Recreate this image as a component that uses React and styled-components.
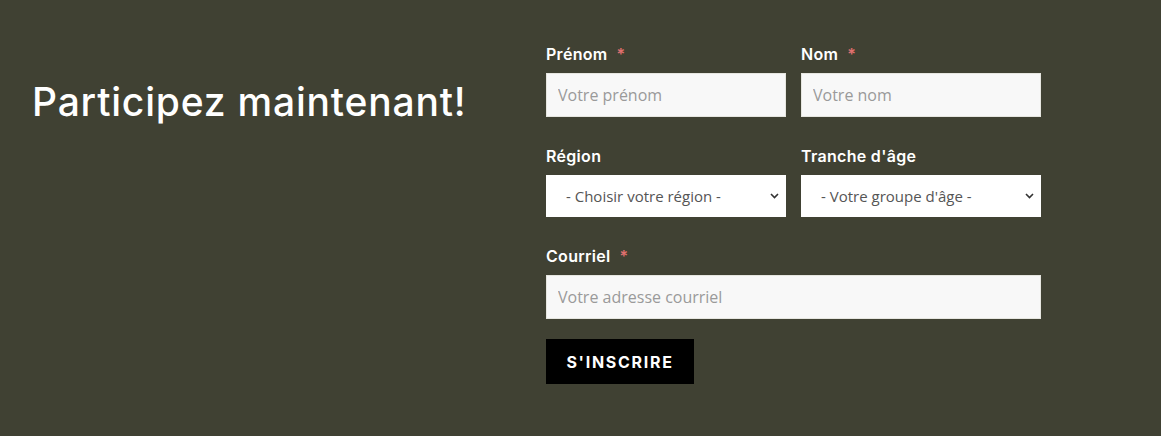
import React from "react";
import styled, { createGlobalStyle } from "styled-components";

const Global = createGlobalStyle`
  html, body { margin: 0; padding: 0; background: #404133; }
  body { font-family: Inter, "Liberation Sans", sans-serif; }
  * { box-sizing: border-box; }
`;

const Section = styled.section`
  display: flex;
  padding: 43px 0 50px 32px;
  background: #404133;
  min-height: 436px;
`;

const Intro = styled.div`
  width: 514px;
  flex: none;
  padding-top: 34px;
`;

const Heading = styled.h2`
  margin: 0;
  color: #fff;
  font-family: Inter, "Liberation Sans", sans-serif;
  font-size: 39px;
  font-weight: 500;
  letter-spacing: 0.8px;
  line-height: 50px;
`;

const Form = styled.form`
  width: 495px;
  display: grid;
  grid-template-columns: 240px 240px;
  column-gap: 15px;
  row-gap: 28px;
  align-content: start;
`;

const Field = styled.div`
  display: flex;
  flex-direction: column;
  grid-column: ${(p) => (p.$wide ? "1 / span 2" : "auto")};
`;

const Label = styled.label`
  display: block;
  color: #fff;
  font-family: Inter, "Liberation Sans", sans-serif;
  font-weight: 600;
  font-size: 16px;
  letter-spacing: 0.3px;
  line-height: 22px;
  margin-bottom: 8px;
`;

const Star = styled.span`
  color: #e0706f;
  margin-left: 9px;
`;

const Input = styled.input`
  height: 44px;
  width: 100%;
  border: 1px solid #e6e6e0;
  background: #f8f8f8;
  padding: 0 11px;
  font-family: "Open Sans", sans-serif;
  font-size: 16px;
  color: #333;
  outline: none;
  &::placeholder { color: #9a9a9a; }
`;

const SelectWrap = styled.div`
  position: relative;
  height: 42px;
`;

const Select = styled.select`
  appearance: none;
  -webkit-appearance: none;
  width: 100%;
  height: 42px;
  border: none;
  background: #fff;
  padding: 0 30px 0 20px;
  font-family: "Open Sans", sans-serif;
  font-size: 15px;
  color: #555;
  outline: none;
`;

const Chevron = styled.svg`
  position: absolute;
  right: 7px;
  top: 18px;
  width: 9px;
  height: 6px;
  pointer-events: none;
`;

const Actions = styled.div`
  grid-column: 1 / span 2;
  margin-top: -8px;
`;

const Button = styled.button`
  height: 45px;
  width: 148px;
  border: none;
  background: #000;
  color: #fff;
  font-family: Inter, "Liberation Sans", sans-serif;
  font-weight: 700;
  font-size: 16px;
  letter-spacing: 1.7px;
  cursor: pointer;
`;

const ChevronIcon = () => (
  <Chevron viewBox="0 0 9 6">
    <path d="M1 1l3.5 3.5L8 1" fill="none" stroke="#333" strokeWidth="1.6" />
  </Chevron>
);

export default function App() {
  return (
    <>
      <Global />
      <Section>
        <Intro>
          <Heading>Participez maintenant!</Heading>
        </Intro>
        <Form onSubmit={(e) => e.preventDefault()}>
          <Field>
            <Label>Prénom<Star>*</Star></Label>
            <Input placeholder="Votre prénom" />
          </Field>
          <Field>
            <Label>Nom<Star>*</Star></Label>
            <Input placeholder="Votre nom" />
          </Field>
          <Field>
            <Label>Région</Label>
            <SelectWrap>
              <Select defaultValue="">
                <option value="">- Choisir votre région -</option>
              </Select>
              <ChevronIcon />
            </SelectWrap>
          </Field>
          <Field>
            <Label>Tranche d'âge</Label>
            <SelectWrap>
              <Select defaultValue="">
                <option value="">- Votre groupe d'âge -</option>
              </Select>
              <ChevronIcon />
            </SelectWrap>
          </Field>
          <Field $wide>
            <Label>Courriel<Star>*</Star></Label>
            <Input placeholder="Votre adresse courriel" />
          </Field>
          <Actions>
            <Button type="submit">S'INSCRIRE</Button>
          </Actions>
        </Form>
      </Section>
    </>
  );
}
